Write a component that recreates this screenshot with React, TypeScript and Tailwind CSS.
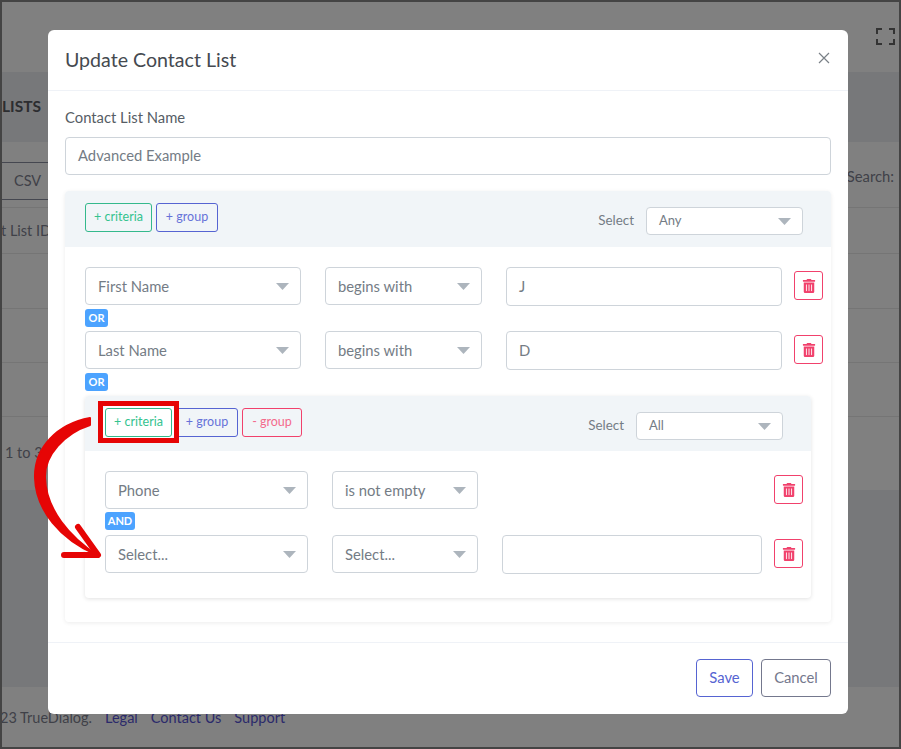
import React from 'react';
import { FaTrashAlt } from 'react-icons/fa';

const Caret: React.FC = () => (
    <svg className="ml-auto shrink-0" width="13" height="7" viewBox="0 0 13 7">
        <path d="M0 0h13L6.5 7z" fill="#adb5bd" />
    </svg>
);

const Field: React.FC<{ label: string; className: string }> = ({ label, className }) => (
    <div className={`flex items-center bg-white border border-[#ced4da] rounded-[4px] pl-3 text-[#747c85] text-[14.8px] shrink-0 ${className}`}>
        {label}
    </div>
);

const Sel: React.FC<{ label: string; className: string; small?: boolean }> = ({ label, className, small }) => (
    <div className={`flex items-center bg-white border border-[#ced4da] rounded-[4px] pl-3 pr-[11px] text-[#747c85] shrink-0 ${small ? 'text-[13px]' : 'text-[14.8px]'} ${className}`}>
        <span>{label}</span>
        <Caret />
    </div>
);

const Chip: React.FC<{ label: string; className: string }> = ({ label, className }) => (
    <button className={`h-[29px] rounded-[3px] border text-[12.5px] flex items-center justify-center ${className}`}>
        {label}
    </button>
);

const Trash: React.FC = () => (
    <button className="w-[29px] h-[29px] mt-1 shrink-0 flex items-center justify-center border border-[#f1416c] rounded-[3px] text-[#f1416c]">
        <FaTrashAlt size={14} />
    </button>
);

const Badge: React.FC<{ label: string; className: string }> = ({ label, className }) => (
    <div className={`h-[18px] flex items-center justify-center bg-[#4ca3ff] text-white font-bold text-[11px] rounded-[3px] ${className}`}>
        {label}
    </div>
);

const Modal: React.FC = () => (
    <div className="absolute left-[46px] top-[28px] w-[800px] h-[684px] bg-white rounded-[6px] flex flex-col">
        <div className="h-[61px] shrink-0 flex items-center justify-between pl-[17px] pr-[18px] border-b border-[#eff2f7]">
            <h2 className="text-[#454a50] text-[19.6px] leading-none">Update Contact List</h2>
            <svg width="12" height="12" viewBox="0 0 12 12" className="-mt-[5px]">
                <path d="M1 1l10 10M11 1L1 11" stroke="#7a8087" strokeWidth="1.2" />
            </svg>
        </div>
        <div className="px-[17px] flex-1 flex flex-col">
            <label className="mt-4 h-[20px] flex items-center text-[#565d65] text-[14.8px]">Contact List Name</label>
            <div className="mt-[10px] h-[38px] flex items-center border border-[#ced4da] rounded-[4px] pl-3 pb-[1px] text-[#747c85] text-[14.8px]">
                Advanced Example
            </div>

            <div className="mt-4 h-[431px] rounded-[4px] shadow-[0_1px_4px_rgba(0,0,0,0.08)] flex flex-col">
                <div className="h-[56px] shrink-0 bg-[#f1f5f8] rounded-t-[4px] pl-5 pr-7 pt-3 flex items-start gap-1">
                    <Chip label="+ criteria" className="w-[67px] border-[#34b98c] text-[#34c38f]" />
                    <Chip label="+ group" className="w-[62px] border-[#5664d2] text-[#6672d8]" />
                    <span className="ml-auto mt-[-3px] mr-2 text-[#747c85] text-[13.4px] leading-[40px]">Select</span>
                    <Sel small label="Any" className="w-[157px] h-[28px] mt-1" />
                </div>

                <div className="pt-5 pl-5 pr-2 flex flex-col">
                    <div className="flex items-start">
                        <Sel label="First Name" className="w-[216px] h-[38px]" />
                        <Sel label="begins with" className="w-[157px] h-[38px] ml-6" />
                        <Field label="J" className="w-[276px] h-[39px] ml-6" />
                        <div className="ml-3"><Trash /></div>
                    </div>
                    <Badge label="OR" className="w-[23px] mt-[3px]" />
                    <div className="flex items-start mt-1">
                        <Sel label="Last Name" className="w-[216px] h-[38px]" />
                        <Sel label="begins with" className="w-[157px] h-[38px] ml-6" />
                        <Field label="D" className="w-[276px] h-[39px] ml-6" />
                        <div className="ml-3"><Trash /></div>
                    </div>
                    <Badge label="OR" className="w-[23px] mt-[3px]" />

                    <div className="mt-[5px] w-[726px] h-[202px] rounded-[4px] shadow-[0_1px_4px_rgba(0,0,0,0.12)] flex flex-col">
                        <div className="h-[55px] shrink-0 bg-[#f1f5f8] rounded-t-[4px] pl-5 pr-7 pt-3 flex items-start gap-1">
                            <Chip label="+ criteria" className="w-[67px] border-[#34b98c] text-[#34c38f] bg-white shadow-[0_0_0_2px_white]" />
                            <Chip label="+ group" className="w-[62px] border-[#5664d2] text-[#6672d8]" />
                            <Chip label="- group" className="w-[60px] border-[#f1416c] text-[#f46a8c]" />
                            <span className="ml-auto mt-[-3px] mr-2 text-[#747c85] text-[13.4px] leading-[40px]">Select</span>
                            <Sel small label="All" className="w-[147px] h-[28px] mt-1" />
                        </div>
                        <div className="pt-5 pl-5 pr-2 flex flex-col">
                            <div className="flex items-start">
                                <Sel label="Phone" className="w-[203px] h-[38px]" />
                                <Sel label="is not empty" className="w-[146px] h-[38px] ml-6" />
                                <div className="ml-auto"><Trash /></div>
                            </div>
                            <Badge label="AND" className="w-[30px] mt-[3px]" />
                            <div className="flex items-start mt-[5px]">
                                <Sel label="Select..." className="w-[203px] h-[38px]" />
                                <Sel label="Select..." className="w-[146px] h-[38px] ml-6" />
                                <Field label="" className="w-[260px] h-[39px] ml-6" />
                                <div className="ml-3"><Trash /></div>
                            </div>
                        </div>
                    </div>
                </div>
            </div>
        </div>
        <div className="h-[72px] shrink-0 border-t border-[#eff2f7] flex items-start justify-end gap-2 pt-4 pr-[17px]">
            <button className="w-[57px] h-[38px] pb-[1px] border border-[#5664d2] rounded-[4px] text-[#5664d2] text-[14.8px]">Save</button>
            <button className="w-[70px] h-[38px] pb-[1px] border border-[#74788d] rounded-[4px] text-[#74788d] text-[14.8px]">Cancel</button>
        </div>
    </div>
);

const App: React.FC = () => {
    return (
        <div className="relative w-[901px] h-[749px] overflow-hidden border-2 border-[#444] bg-[#808080] font-['Lato','Noto_Sans',sans-serif]">
            {/* page behind the backdrop */}
            <div className="h-[70px] bg-[#808080] shadow-[0_1px_2px_rgba(0,0,0,0.1)] flex items-start justify-end pt-[26px] pr-[4px]">
                <svg width="19" height="17" viewBox="0 0 19 17" fill="none" stroke="#333" strokeWidth="2">
                    <path d="M1 6V1h5M13 1h5v5M18 11v5h-5M6 16H1v-5" />
                </svg>
            </div>
            <div className="h-[70px] bg-[#77787a] flex items-center text-[#2c2d30] font-bold text-[15.5px]">LISTS</div>
            <div className="h-[348px] bg-[#808080] flex flex-col">
                <div className="mt-5 h-[38px] flex items-start justify-between">
                    <div className="w-[46px] h-[38px] border-y border-[#454750] flex items-center pl-3 text-[#3f4148] text-[14.5px]">CSV</div>
                    <span className="mt-[3px] mr-[5px] text-[#3f4148] text-[14.8px]">Search:</span>
                </div>
                <div className="mt-[7px] h-[47px] border-y border-[#757575] flex items-center text-[#3f4148] text-[14.5px] whitespace-nowrap">
                    <span className="-ml-[1px]">t List ID</span>
                </div>
                <div className="h-[55px] border-b border-[#757575]" />
                <div className="h-[54px] border-b border-[#757575]" />
                <div className="h-[54px] border-b border-[#757575]" />
                <div className="flex-1 flex items-center text-[#3f4148] text-[14.5px] pb-[1px] pl-[3px]">1 to 3</div>
            </div>
            <div className="h-[197px] bg-[#77787a]" />
            <div className="flex-1 pt-5 text-[14.5px] text-[#3f4148] flex gap-[13px] whitespace-nowrap">
                <span className="-ml-[2px]">23 TrueDialog.</span>
                <span className="text-[#2b2a6b]">Legal</span>
                <span className="text-[#2b2a6b]">Contact Us</span>
                <span className="text-[#2b2a6b]">Support</span>
            </div>

            <Modal />

            {/* tutorial annotations */}
            <div className="absolute left-[96px] top-[399px] w-[81px] h-[42px] border-[5px] border-[#e60505]" />
            <svg className="absolute left-[-2px] top-[-2px] pointer-events-none" width="901" height="749" fill="none" stroke="#e60505" strokeLinecap="round" strokeLinejoin="round">
                <path d="M90 418C58 424 34 447 35 478C36 510 60 539 97 555C70 537 46 510 45 478C44 455 65 433 90 425Z" fill="#e60505" strokeWidth="2" />
                <path d="M78 527L98 555L64 555" strokeWidth="6" />
            </svg>
        </div>
    );
};

export default App;
